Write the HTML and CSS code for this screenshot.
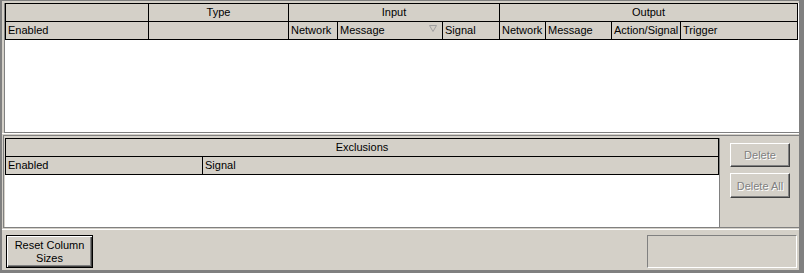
FILE: index.html
```html
<html>
<head>
    <link rel="stylesheet" href="styles.css">
</head>

<body>

<div class="frame">
    <div class="rules">
        <div class="head rules-head">
            <div class="cell"></div>
            <div class="cell center">Type</div>
            <div class="cell center span3">Input</div>
            <div class="cell center span4">Output</div>

            <div class="cell">Enabled</div>
            <div class="cell"></div>
            <div class="cell">Network</div>
            <div class="cell sorted">Message
                <svg class="arrow" width="8" height="7" viewBox="0 0 8 7"><polygon points="0.5,0.5 7.5,0.5 4,6.5" fill="none" stroke="#a0a0a0"/></svg>
            </div>
            <div class="cell">Signal</div>
            <div class="cell">Network</div>
            <div class="cell">Message</div>
            <div class="cell">Action/Signal</div>
            <div class="cell">Trigger</div>
        </div>
    </div>

    <div class="splitter"></div>

    <div class="lower">
        <div class="excl">
            <div class="head excl-head">
                <div class="cell center span2">Exclusions</div>
                <div class="cell">Enabled</div>
                <div class="cell">Signal</div>
            </div>
        </div>
        <div class="side">
            <button class="btn" disabled>Delete</button>
            <button class="btn" disabled>Delete All</button>
        </div>
    </div>

    <div class="bar">
        <button class="btn reset">Reset Column<br>Sizes</button>
        <div class="status"></div>
    </div>
</div>

</body>
</html>
```

FILE: styles.css
```css
body { margin: 0; background: #d4d0c8; font-family: "Liberation Sans", Arial, sans-serif; font-size: 11px; color: #000; }

.frame { width: 804px; height: 273px; box-sizing: border-box; border-top: 1px solid #808080; border-left: 2px solid #808080; border-right: 5px solid #808080; border-bottom: 3px solid #808080; display: flex; flex-direction: column; }

/* rules table */
.rules { margin: 2px 0 0 2px; height: 129px; background: #fff; border-left: 1px solid #808080; border-bottom: 1px solid #808080; }
.splitter { height: 1px; border-top: 1px solid #fff; }

.head { display: grid; border-top: 1px solid #000; border-left: 1px solid #000; background: #d4d0c8; }
.rules-head { width: 792px; grid-template-columns: 143px 140px 49px 105px 57px 46px 66px 69px 117px; }
.excl-head { width: 713px; grid-template-columns: 197px 516px; }

.cell { height: 17px; line-height: 17px; padding-left: 2px; border-right: 1px solid #000; border-bottom: 1px solid #000; white-space: nowrap; overflow: hidden; }
.center { text-align: center; padding-left: 0; }
.span2 { grid-column: span 2; }
.span3 { grid-column: span 3; }
.span4 { grid-column: span 4; }
.sorted { display: flex; justify-content: space-between; align-items: center; padding-right: 5px; }
.arrow { display: block; margin-top: -4px; }

/* exclusions */
.lower { margin-left: 1px; height: 89px; border-top: 1px solid #808080; border-left: 1px solid #808080; border-bottom: 1px solid #808080; padding: 2px 0 0 1px; display: flex; }
.excl { width: 714px; background: #fff; border-right: 1px solid #808080; }
.side { flex: 1; display: flex; flex-direction: column; align-items: flex-start; gap: 6px; padding: 5px 0 0 10px; }

/* buttons */
.btn { font-family: inherit; font-size: 11px; background: #d4d0c8; border: 1px solid; border-color: #fff #404040 #404040 #fff; box-shadow: inset -1px -1px 0 #808080; padding: 0; width: 60px; height: 24px; color: #000; }
.btn:disabled { color: #808080; text-shadow: 1px 1px 0 #fff; }
.side .btn + .btn { height: 25px; }

.bar { margin-top: 1px; border-top: 1px solid #fff; flex: 1; display: flex; justify-content: space-between; align-items: flex-start; padding: 5px 2px 0 4px; }
.reset { width: 87px; height: 33px; border: 1px solid #000; box-shadow: inset 1px 1px 0 #fff, inset -1px -1px 0 #404040, inset -2px -2px 0 #808080; line-height: 13px; }
.status { width: 150px; height: 33px; box-sizing: border-box; border: 1px solid; border-color: #808080 #fff #fff #808080; }
```
